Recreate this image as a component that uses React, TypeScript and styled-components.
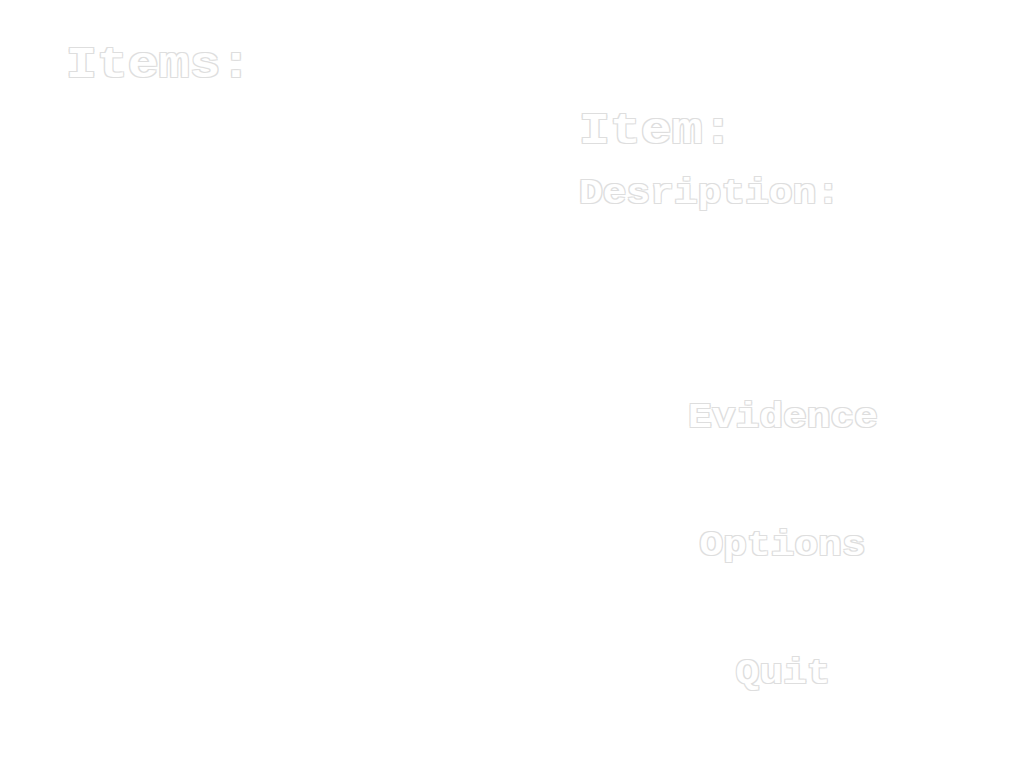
import React from 'react';
import styled, { createGlobalStyle } from 'styled-components';

const GlobalStyle = createGlobalStyle`
    html, body {
        margin: 0;
        padding: 0;
        background: #ffffff;
    }
    body {
        font-family: 'Liberation Mono', 'Courier New', monospace;
    }
`;

// white letters, only a faint grey rim shows them on the white page
const outline = `
    color: #ffffff;
    font-weight: bold;
    white-space: pre;
    text-shadow:
        1px 1px 0 #dedede,
        -1px -1px 0 #dedede,
        1px -1px 0 #dedede,
        -1px 1px 0 #dedede;
`;

const Screen = styled.div`
    display: grid;
    grid-template-columns: 542px 482px;
    width: 1024px;
    height: 768px;
    background: #ffffff;
`;

const ItemsPanel = styled.div`
    padding: 40px 0 0 66px;
`;

const Heading = styled.h1`
    ${outline}
    display: inline-block;
    margin: 0;
    font-size: 44px;
    line-height: 50px;
    transform: scaleX(1.17);
    transform-origin: left center;
`;

const DetailPanel = styled.div`
    display: flex;
    flex-direction: column;
    align-items: flex-start;
    padding: 106px 0 0 37px;
`;

const DescLabel = styled.div`
    ${outline}
    display: inline-block;
    margin-top: 16px;
    font-size: 35px;
    line-height: 44px;
    transform: scaleX(1.13);
    transform-origin: left center;
`;

const Actions = styled.div`
    display: flex;
    flex-direction: column;
    align-items: center;
    align-self: stretch;
    gap: 88px;
    margin: 182px 0 0 -37px;
`;

const ActionButton = styled.button`
    ${outline}
    background: none;
    border: none;
    padding: 0;
    font-family: 'Liberation Mono', 'Courier New', monospace;
    font-size: 35px;
    line-height: 40px;
    transform: scaleX(1.13);
    cursor: pointer;
`;

const App: React.FC = () => {
    return (
        <>
            <GlobalStyle />
            <Screen>
                <ItemsPanel>
                    <Heading>Items:</Heading>
                </ItemsPanel>
                <DetailPanel>
                    <Heading>Item:</Heading>
                    <DescLabel>Desription:</DescLabel>
                    <Actions>
                        <ActionButton>Evidence</ActionButton>
                        <ActionButton>Options</ActionButton>
                        <ActionButton>Quit</ActionButton>
                    </Actions>
                </DetailPanel>
            </Screen>
        </>
    );
};

export default App;
